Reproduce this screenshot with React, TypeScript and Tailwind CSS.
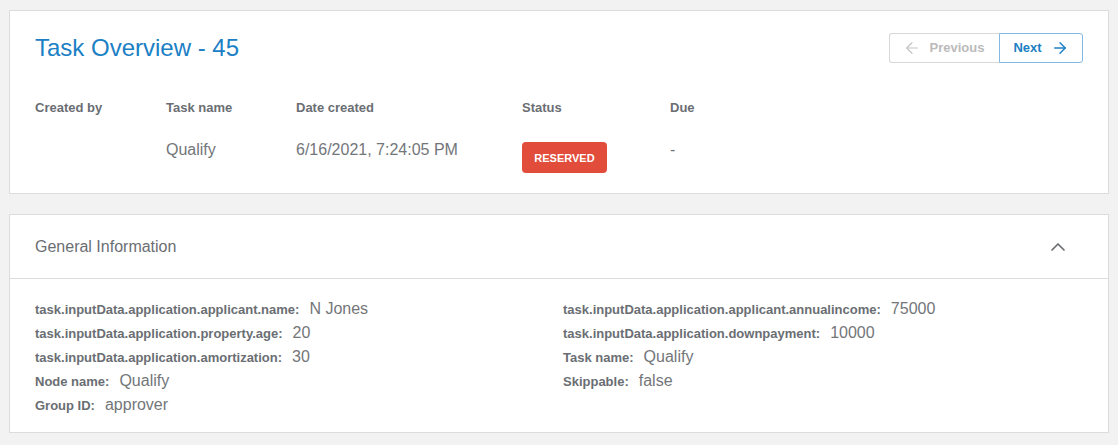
// Task overview page: summary card with pager + collapsible general info
import { ArrowLeft, ArrowRight, ChevronUp } from 'lucide-react';

const columns = [
  { label: 'Created by', value: '', w: 'w-[131px]' },
  { label: 'Task name', value: 'Qualify', w: 'w-[130px]' },
  { label: 'Date created', value: '6/16/2021, 7:24:05 PM', w: 'w-[226px]' },
  { label: 'Status', value: 'badge', w: 'w-[148px]' },
  { label: 'Due', value: '-', w: 'flex-1' },
];

const leftInfo = [
  ['task.inputData.application.applicant.name:', 'N Jones'],
  ['task.inputData.application.property.age:', '20'],
  ['task.inputData.application.amortization:', '30'],
  ['Node name:', 'Qualify'],
  ['Group ID:', 'approver'],
];

const rightInfo = [
  ['task.inputData.application.applicant.annualincome:', '75000'],
  ['task.inputData.application.downpayment:', '10000'],
  ['Task name:', 'Qualify'],
  ['Skippable:', 'false'],
];

function InfoRow({ label, value }: { label: string; value: string }) {
  return (
    <div className="flex h-6 items-baseline">
      <span className="text-[13px] font-bold text-[#6a6e73]">{label}</span>
      <span className="ml-[10px] text-[16px] text-[#737679]">{value}</span>
    </div>
  );
}

export default function App() {
  return (
    <div className="min-h-screen bg-[#f2f2f2] px-[9px] pt-[10px] pb-3 font-['Liberation_Sans',Arial,sans-serif]">
      {/* overview card */}
      <section className="border border-[#dcdcdc] bg-white px-[25px] pt-[19px] pb-[20px]">
        <div className="flex h-[36px] items-center justify-between">
          <h1 className="text-[24px] leading-[36px] text-[#1b80c4]">Task Overview - 45</h1>
          <div className="flex h-[30px] text-[13px] font-bold">
            <button className="flex w-[110px] items-center justify-center gap-[9px] rounded-l-[3px] border border-r-0 border-[#d8d8d8] pr-[2px] text-[#bbbbbb]">
              <ArrowLeft className="h-[18px] w-[18px] text-[#c4c4c4]" strokeWidth={1.6} />
              Previous
            </button>
            <button className="flex w-[84px] items-center justify-center gap-[9px] rounded-r-[3px] border border-[#82b8e2] text-[#1b80c4]">
              Next
              <ArrowRight className="h-[18px] w-[18px]" strokeWidth={1.9} />
            </button>
          </div>
        </div>

        <div className="mt-[32px] flex">
          {columns.map((c) => (
            <div key={c.label} className={c.w}>
              <div className="text-[13px] font-bold leading-5 text-[#6a6e73]">{c.label}</div>
              <div className="mt-[20px] text-[16px] leading-6 text-[#737679]">
                {c.value === 'badge' ? (
                  <span className="mt-[4px] inline-flex h-[31px] w-[85px] items-center justify-center rounded-[4px] bg-[#e24c3a] text-[11px] font-bold text-white">
                    RESERVED
                  </span>
                ) : (
                  c.value || '\u00a0'
                )}
              </div>
            </div>
          ))}
        </div>
      </section>

      {/* general information card */}
      <section className="mt-5 border border-[#dcdcdc] bg-white">
        <div className="flex h-[64px] items-center justify-between border-b border-[#dcdcdc] pl-[25px] pr-[38px]">
          <h2 className="text-[16px] text-[#6a6e73]">General Information</h2>
          <ChevronUp className="h-6 w-6 text-[#6a6e73]" strokeWidth={1.75} />
        </div>
        <div className="grid grid-cols-[528px_1fr] px-[25px] pt-[18px] pb-[15px]">
          <div>
            {leftInfo.map(([l, v]) => (
              <InfoRow key={l} label={l} value={v} />
            ))}
          </div>
          <div>
            {rightInfo.map(([l, v]) => (
              <InfoRow key={l} label={l} value={v} />
            ))}
          </div>
        </div>
      </section>
    </div>
  );
}
